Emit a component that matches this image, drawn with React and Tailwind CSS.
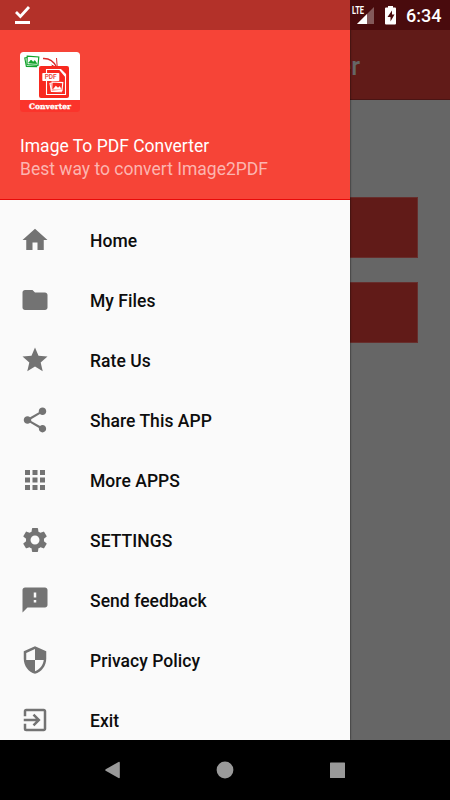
import {
  MdHome,
  MdFolder,
  MdStar,
  MdShare,
  MdApps,
  MdSettings,
  MdFeedback,
  MdSecurity,
  MdExitToApp,
} from 'react-icons/md';

const menuItems = [
  { label: 'Home', icon: MdHome },
  { label: 'My Files', icon: MdFolder },
  { label: 'Rate Us', icon: MdStar },
  { label: 'Share This APP', icon: MdShare },
  { label: 'More APPS', icon: MdApps },
  { label: 'SETTINGS', icon: MdSettings },
  { label: 'Send feedback', icon: MdFeedback },
  { label: 'Privacy Policy', icon: MdSecurity },
  { label: 'Exit', icon: MdExitToApp },
];

function AppLogo() {
  return (
    <svg width="60" height="60" viewBox="0 0 60 60">
      <rect width="60" height="60" rx="3.5" fill="#fb342b" />
      <path d="M0 48V3.5A3.5 3.5 0 0 1 3.5 0h53A3.5 3.5 0 0 1 60 3.5V48z" fill="#fff" />

      {/* Green photos */}
      <g fill="none" stroke="#12a42b" strokeWidth="1.2">
        <path d="M7 5.5 4.8 6l1.6 8.5 10.8.2" />
        <path d="m7.2 4.2 11.6.8-.8 8.4-11-.8z" />
        <path d="m8.5 11 2.5-3 2.2 2 1.7-1.5 2 3.2z" fill="#12a42b" strokeWidth=".6" />
      </g>

      {/* Arrow */}
      <g fill="none" stroke="#d9292b">
        <path d="M23 6.5c6-.3 10.500 2.300 13.500 8.500" strokeWidth="1.300" />
        <path d="m31.500 13 5.800 3-.8-10" strokeWidth="1" />
      </g>

      {/* Document */}
      <rect x="19" y="14" width="30" height="32" rx="2" fill="#f8291f" />
      <g fill="none" stroke="#fff" strokeWidth="1.100">
        <path d="M26.500 21v-3.500h14l5 5V42.500h-19V29" />
        <path d="m39.500 17.500 6 7v-2l-5-5z" fill="#fff" />
        <path d="m31.500 31-1.500.4 1.400 8 10.600.4" />
        <path d="m32 30 10.800.6-.8 8-10.300-.7z" />
        <path d="m33.500 37 2.300-3 2.200 2 1.700-1.500 1.600 3z" fill="#fff" strokeWidth=".5" />
      </g>
      <rect x="22.300" y="21" width="17" height="8" rx=".7" fill="#fff" />
      <text
        x="30.700"
        y="27.300"
        textAnchor="middle"
        textLength="12"
        className="font-['Roboto',sans-serif] text-[6.500px] font-medium"
        fill="#e8372f"
      >
        PDF
      </text>
      <text
        x="30"
        y="57"
        textAnchor="middle"
        textLength="42"
        lengthAdjust="spacingAndGlyphs"
        className="font-['DejaVu_Serif',serif] text-[7.500px] font-bold"
        fill="#fff"
        stroke="#fff"
        strokeWidth=".3"
      >
        Converter
      </text>
    </svg>
  );
}

function StatusBar() {
  return (
    <div className="absolute inset-x-0 top-0 flex h-[30px] text-white">
      <div className="w-[350px] bg-[#b33129]">
        <svg width="50" height="30" viewBox="0 0 50 30" fill="none" stroke="#fff">
          <path d="m16 12 4.400 4.400L29 7" strokeWidth="2.800" />
          <path d="M15 22.500h15" strokeWidth="3" />
        </svg>
      </div>
      <div className="flex flex-1 bg-[#490b0d]">
        <svg width="54" height="30" viewBox="0 0 54 30">
          <text
            x="2"
            y="13.500"
            textLength="12"
            lengthAdjust="spacingAndGlyphs"
            className="font-['Roboto',sans-serif] text-[10px] font-bold"
            fill="#fff"
          >
            LTE
          </text>
          <path d="M24 7v17H7z" fill="#fff" opacity=".32" />
          <path d="M17 14v10H7z" fill="#fff" />
          <path
            d="M38 7.500V6h5v1.500h2a1 1 0 0 1 1 1v15a1 1 0 0 1-1 1h-9a1 1 0 0 1-1-1v-15a1 1 0 0 1 1-1z"
            fill="#fff"
          />
          <path d="M42 10.500 37.500 17h3v4.500l4-7h-2.500z" fill="#490b0d" />
        </svg>
        <span className="pl-[2px] text-[18px] leading-[31px] font-medium">6:34</span>
      </div>
    </div>
  );
}

function Drawer() {
  return (
    <aside className="absolute top-0 left-0 flex h-[740px] w-[350px] flex-col overflow-hidden bg-[#fafafa] shadow-[0_0_2px_rgba(0,0,0,0.8)]">
      <header className="h-[200px] shrink-0 border-b border-[#e80a0a] bg-[#f64437] px-5 pt-[52px]">
        <AppLogo />
        <h2 className="mt-[22px] text-[17.5px] leading-6 text-white">Image To PDF Converter</h2>
        <p className="text-[17.5px] leading-[23px] text-[#fcb5b0]">Best way to convert Image2PDF</p>
      </header>
      <nav className="pt-[10px]">
        {menuItems.map(({ label, icon: Icon }) => (
          <a key={label} className="flex h-[60px] items-center gap-10 px-5">
            <Icon size={30} className="shrink-0 text-[#737373]" />
            <span className="pt-[2px] text-[17.5px] font-medium tracking-[0.05px] text-[#0d0d0d]">
              {label}
            </span>
          </a>
        ))}
      </nav>
    </aside>
  );
}

export default function App() {
  return (
    <div className="relative flex h-[800px] w-[450px] flex-col overflow-hidden bg-[#666] font-['Roboto',sans-serif]">
      {/* Dimmed screen behind the drawer */}
      <div className="h-[100px] border-b border-[#4a1514] bg-[#611b18] pt-[30px] pr-[90px] text-right text-[25px] leading-[73px] font-medium whitespace-nowrap text-[#666]">
        Image To PDF Converter
      </div>
      <main className="flex flex-1 flex-col gap-[24px] px-[32px] pt-[97px]">
        <div className="h-[61px] border border-[#672e2c] bg-[#611b18]" />
        <div className="h-[61px] border border-[#672e2c] bg-[#611b18]" />
      </main>

      {/* Navigation bar */}
      <footer className="flex h-[60px] items-center bg-black pl-[105px]">
        <svg width="240" height="30" viewBox="0 0 240 30" fill="#999">
          <path d="M.7 14.200 13.500 7q1.300-.5 1.300.8v14.400q0 1.300-1.300.8L.7 15.800q-1-.8 0-1.600z" />
          <circle cx="120" cy="15" r="8.400" />
          <rect x="225" y="7.500" width="15" height="15.500" rx=".6" />
        </svg>
      </footer>

      <Drawer />
      <StatusBar />
    </div>
  );
}
